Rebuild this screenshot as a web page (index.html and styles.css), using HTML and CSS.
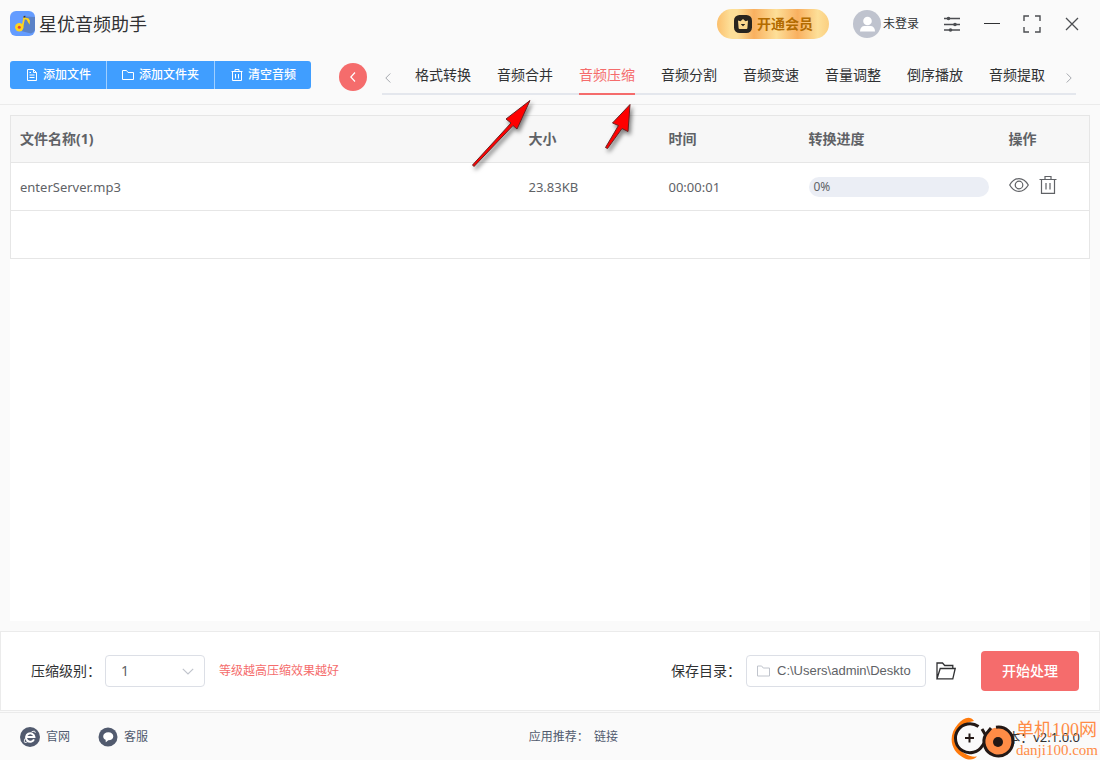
FILE: index.html
```html
<!DOCTYPE html>
<html lang="zh-CN">
<head>
<meta charset="utf-8">
<meta name="viewport" content="width=device-width, initial-scale=1">
<title>星优音频助手</title>
<link rel="stylesheet" href="styles.css">
</head>
<body>
<div class="app">
  <header class="titlebar">
    <div class="brand">
      <svg class="logo" viewBox="0 0 25 25" width="25" height="25" aria-hidden="true">
        <rect width="25" height="25" rx="6" fill="#649cff"/>
        <path d="M14.5 5.500 25 6V19a6 6 0 0 1-4 3.500L11 20Z" fill="#5a82c8"/>
        <circle cx="9.300" cy="16.200" r="4.200" fill="#ffd51c"/>
        <circle cx="9.300" cy="16.200" r="1.500" fill="#e2453c"/>
        <path d="M12.400 16 14.500 5.500" stroke="#ffd51c" stroke-width="1.700" fill="none"/>
        <path d="M13.800 5.800 16 7l2.300.300 1.600 2.200-.2 4.300-1.700-2.600-1.200-2.400-3-.7Z" fill="#ffd51c"/>
        <path d="m13.700 5 1.700-.2v1.600l-2 .4Z" fill="#2c3550"/>
      </svg>
      <h1 class="brand-name">星优音频助手</h1>
    </div>
    <div class="title-actions">
      <button class="vip" type="button">
        <svg viewBox="0 0 18 18" width="18" height="18" aria-hidden="true">
          <rect width="18" height="18" rx="5.500" fill="#29251f"/>
          <path d="M4 5.500 6.500 6.300 9 4l2.500 2.300L14 5.500l-.6 7.500a1 1 0 0 1-1 1H5.600a1 1 0 0 1-1-1Z" fill="#fcd88e"/>
          <path d="m7 9 2 2.100L11 9" fill="#29251f" stroke="#29251f" stroke-width=".6"/>
        </svg>
        <span>开通会员</span>
      </button>
      <button class="user" type="button">
        <svg viewBox="0 0 28 28" width="28" height="28" aria-hidden="true">
          <circle cx="14" cy="14" r="14" fill="#bfc3ce"/>
          <circle cx="14.500" cy="11" r="4.300" fill="#fff"/>
          <path d="M7 21.500c0-3.600 2-5.500 4.500-5.500h6c2.500 0 4.500 1.900 4.500 5.500Z" fill="#fff"/>
        </svg>
        <span>未登录</span>
      </button>
      <div class="window-controls">
        <button type="button" aria-label="设置">
          <svg viewBox="0 0 16 16" width="16" height="16" fill="none" stroke="#4c4e52" stroke-width="1.400"><path d="M0 2.500h16M0 8.500h16M0 14h16"/><g fill="#4c4e52" stroke="none"><circle cx="4.500" cy="2.500" r="1.800"/><circle cx="11" cy="8.500" r="1.800"/><circle cx="6.500" cy="14" r="1.800"/></g></svg>
        </button>
        <button type="button" aria-label="最小化">
          <svg viewBox="0 0 16 16" width="16" height="16" stroke="#303133" stroke-width="1"><path d="M0 7.500h16"/></svg>
        </button>
        <button type="button" aria-label="最大化">
          <svg viewBox="0 0 18 18" width="18" height="18" fill="none" stroke="#4c4e52" stroke-width="1.400"><path d="M1 6V1h5M12 1h5v5M17 12v5h-5M6 17H1v-5"/></svg>
        </button>
        <button type="button" aria-label="关闭">
          <svg viewBox="0 0 14 14" width="14" height="14" stroke="#4c4e52" stroke-width="1.300"><path d="m1 1 12 12M13 1 1 13"/></svg>
        </button>
      </div>
    </div>
  </header>

  <div class="toolbar">
    <div class="file-buttons">
      <button type="button">
        <svg viewBox="0 0 12 12" width="12" height="12" fill="none" stroke="#fff"><path d="M1.500.5h6l3 3v8h-9ZM7.500.5v3h3M3.500 3.500H5M3.500 6h5M3.500 8.500h5"/></svg>
        <span>添加文件</span>
      </button>
      <button type="button">
        <svg viewBox="0 0 12 12" width="12" height="12" fill="none" stroke="#fff"><path d="M.5 10.500v-9h4l1.500 2h5.500v7Z"/></svg>
        <span>添加文件夹</span>
      </button>
      <button type="button">
        <svg viewBox="0 0 12 12" width="12" height="12" fill="none" stroke="#fff"><path d="M.5 2.500h11M4 2.500v-2h4v2M1.500 2.500v9h9v-9M4.500 5v4.500M7.500 5v4.500"/></svg>
        <span>清空音频</span>
      </button>
    </div>
    <button class="back" type="button" aria-label="返回">
      <svg viewBox="0 0 6 10" width="6" height="10" fill="none" stroke="#fff" stroke-width="1.200"><path d="M5 .5.800 5 5 9.500"/></svg>
    </button>
    <nav class="tabs">
      <button class="tab-arrow" type="button" aria-label="向左">
        <svg viewBox="0 0 6 10" width="6" height="10" fill="none" stroke="#a5a8ae"><path d="M5.300.5.800 5l4.500 4.500"/></svg>
      </button>
      <div class="tab-list">
        <a href="#">格式转换</a>
        <a href="#">音频合并</a>
        <a href="#" class="active" aria-current="page">音频压缩</a>
        <a href="#">音频分割</a>
        <a href="#">音频变速</a>
        <a href="#">音量调整</a>
        <a href="#">倒序播放</a>
        <a href="#">音频提取</a>
      </div>
      <button class="tab-arrow" type="button" aria-label="向右">
        <svg viewBox="0 0 6 10" width="6" height="10" fill="none" stroke="#a5a8ae"><path d="M.7.500 5.200 5 .7 9.500"/></svg>
      </button>
    </nav>
  </div>

  <main class="content">
    <table class="files">
      <colgroup><col><col class="col-short"><col class="col-short"><col class="col-progress"><col class="col-ops"></colgroup>
      <thead>
        <tr><th>文件名称(1)</th><th>大小</th><th>时间</th><th>转换进度</th><th>操作</th></tr>
      </thead>
      <tbody>
        <tr>
          <td>enterServer.mp3</td>
          <td>23.83KB</td>
          <td>00:00:01</td>
          <td><div class="progress" role="progressbar" aria-label="转换进度" aria-valuenow="0" aria-valuemin="0" aria-valuemax="100">0%</div></td>
          <td>
            <div class="row-ops">
              <button type="button" aria-label="预览">
                <svg viewBox="0 0 20 18" width="20" height="18" fill="none" stroke="#606266" stroke-width="1.200"><path d="M.7 9C3 5 6 2.600 10 2.600S17 5 19.300 9C17 13 14 15.400 10 15.400S3 13 .7 9Z"/><circle cx="10" cy="9" r="3.800"/></svg>
              </button>
              <button type="button" aria-label="删除">
                <svg viewBox="0 0 18 18" width="18" height="18" fill="none" stroke="#606266" stroke-width="1.200"><path d="M.5 3.500h17M6 3.500v-3h6v3M2.500 3.500v13.900h13V3.500M7 7v6.500M11 7v6.500"/></svg>
              </button>
            </div>
          </td>
        </tr>
        <tr><td colspan="5"></td></tr>
      </tbody>
    </table>
  </main>

  <section class="settings">
    <div class="field">
      <label for="level">压缩级别：</label>
      <div class="select-wrap">
        <select id="level"><option>1</option><option>2</option><option>3</option></select>
        <svg class="caret" viewBox="0 0 12 7" width="12" height="7" fill="none" stroke="#c0c4cc" stroke-width="1.200"><path d="m.8.800 5.200 5.200L11.200.800"/></svg>
      </div>
      <span class="hint">等级越高压缩效果越好</span>
    </div>
    <div class="field">
      <label for="dir">保存目录：</label>
      <div class="path-box">
        <svg viewBox="0 0 13 12" width="13" height="12" fill="none" stroke="#c0c4cc"><path d="M.5 11V1h4.200l1.500 2h6.300v8Z"/></svg>
        <input id="dir" type="text" value="C:\Users\admin\Deskto">
      </div>
      <button class="open" type="button" aria-label="打开目录">
        <svg viewBox="0 0 20 18" width="20" height="18" fill="none" stroke="#303133" stroke-width="1.300"><path d="M1 16.800V1h5.500L8.700 3.500h8.100v3M1 16.800 4.200 6.500h15L16.800 16.800Z"/></svg>
      </button>
      <button class="start" type="button">开始处理</button>
    </div>
  </section>

  <footer class="footer">
    <div class="links">
      <a href="#">
        <svg viewBox="0 0 20 20" width="20" height="20" aria-hidden="true"><circle cx="10" cy="10" r="10" fill="#515a6e"/><g fill="none" stroke="#fff"><path d="M14 12.400A4.200 4.200 0 1 1 14.400 10H6.500" stroke-width="2"/><path d="M5.200 11.500c-1.300 2.700-1 4 0 4 .9 0 2.200-.6 3.300-1.400M11.500 5c2.400-1.200 4-1 3.700.8" stroke-width="1"/></g></svg>
        <span>官网</span>
      </a>
      <a href="#">
        <svg viewBox="0 0 20 20" width="20" height="20" aria-hidden="true"><circle cx="10" cy="10" r="9.500" fill="#515a6e"/><path d="M10.300 5.200c3 0 5 1.700 5 4 0 2.500-2 4.100-5 4.100l-2.500 2-.2-2.500c-1.500-.7-2.400-2-2.400-3.600 0-2.300 2.100-4 5.100-4Z" fill="#fff"/></svg>
        <span>客服</span>
      </a>
    </div>
    <p class="recommend">应用推荐： <a href="#">链接</a></p>
    <p class="version">版本：v2.1.0.0</p>
  </footer>

  <svg class="arrows" viewBox="0 0 180 90" width="180" height="90" aria-hidden="true">
    <g class="arrow-shape">
      <path d="M12.500 75 51 33l-5-4L70 10.500 57 39l-4-3.500L14 76.500Z"/>
      <path d="m145.500 57.500 13-22-6-2.500L170 14.500l-2 27-6-3L147.500 58.500Z"/>
    </g>
  </svg>

  <div class="watermark">
    <svg viewBox="0 0 66 44" width="66" height="44" aria-hidden="true">
      <path d="M24 5C20-1 13 2 8 8-3 20 1 36 14 42c5 2.500 10 2 13-1.500-8 1-16-4-19-10C3 20 8 8 24 5Z" fill="#ff7a0c"/>
      <circle cx="19.500" cy="22.500" r="15" fill="#fafafa"/>
      <path d="M28.500 10.500A14.500 14.500 0 1 0 32.500 29.500L37.500 22.500 32 13" fill="none" stroke="#231815" stroke-width="3"/>
      <path d="M19.500 17.500v9M15 22h9" stroke="#231815" stroke-width="2"/>
      <circle cx="48" cy="25.500" r="14" fill="#ff8c46"/>
      <path d="M46 11.200A14.500 14.500 0 1 1 36 18L41 12" fill="none" stroke="#231815" stroke-width="3"/>
      <circle cx="48" cy="26" r="5" fill="#231815"/>
    </svg>
    <div class="watermark-text"><span class="watermark-name">单机100网</span><span class="watermark-site">danji100.com</span></div>
  </div>
</div>
</body>
</html>
```
FILE: styles.css
```css
* { box-sizing: border-box; }

body {
  margin: 0;
  background: #fafafa;
  color: #303133;
  font: 14px/20px "Noto Sans", "Noto Sans CJK SC", sans-serif;
}

button, input, select { font: inherit; color: inherit; }
button { border: 0; padding: 0; background: none; cursor: pointer; }
a { color: inherit; text-decoration: none; }
svg { display: block; flex: none; }
p, h1 { margin: 0; }

.app {
  position: relative;
  display: flex;
  flex-direction: column;
  min-height: 100vh;
}

.titlebar {
  display: flex;
  align-items: center;
  justify-content: space-between;
  height: 47px;
  padding: 0 20px 0 10px;
}
.brand { display: flex; align-items: center; gap: 4px; }
.brand-name { font-size: 18px; font-weight: 400; line-height: 24px; }
.title-actions { display: flex; align-items: center; height: 46px; }

.vip {
  display: flex;
  align-items: center;
  gap: 5px;
  height: 30px;
  padding: 0 16px 0 17px;
  border-radius: 15px;
  background: linear-gradient(90deg, #fbbf6c 0%, #fddf98 12%, #fddf98 18%, #f9b060 33%, #fddf98 53%, #f9b060 72%, #fddf98 90%, #fbcf80 100%);
  color: #b36b00;
  font-weight: 700;
}
.user {
  display: flex;
  align-items: center;
  gap: 2px;
  margin-left: 24px;
  font-size: 12px;
}
.window-controls { display: flex; margin-left: 13px; }
.window-controls button {
  display: flex;
  align-items: center;
  justify-content: center;
  width: 40px;
  height: 30px;
}
.window-controls button:last-child { margin-right: -12px; }

.toolbar {
  display: flex;
  align-items: flex-start;
  height: 58px;
  padding: 14px 24px 0 10px;
  border-bottom: 1px solid #ebebeb;
}
.file-buttons {
  display: flex;
  border-radius: 3px;
  overflow: hidden;
  background: #409eff;
  color: #fff;
  font-size: 12px;
  font-weight: 500;
}
.file-buttons button {
  display: flex;
  align-items: center;
  gap: 5px;
  height: 28px;
  padding: 0 15px;
}
.file-buttons button:first-child,
.file-buttons button:last-child { padding-left: 16px; }
.file-buttons button + button { border-left: 1px solid #a0cfff; }
.back {
  display: flex;
  align-items: center;
  justify-content: center;
  width: 28px;
  height: 28px;
  margin: 2px 15px 0 28px;
  border-radius: 50%;
  background: #f56c6c;
}
.tabs {
  display: flex;
  flex: 1;
  height: 34px;
  border-bottom: 2px solid #e4e7ed;
}
.tab-arrow { padding: 2px 4px 0 3px; height: 32px; }
.tab-list {
  display: flex;
  flex: 1;
  gap: 26px;
  padding-left: 20px;
}
.tab-list a { height: 34px; line-height: 28px; white-space: nowrap; }
.tab-list .active { color: #f56c6c; border-bottom: 2px solid #f56c6c; }

.content {
  flex: 1;
  margin: 10px;
  background: #fff;
}
.files {
  width: 100%;
  table-layout: fixed;
  border-collapse: collapse;
  border: 1px solid #e6e6e6;
  color: #606266;
}
.col-short { width: 140px; }
.col-progress { width: 200px; }
.col-ops { width: 91px; }
.files th, .files td {
  height: 48px;
  padding: 0 10px;
  border-bottom: 1px solid #e6e6e6;
  text-align: left;
}
.files th { height: 47px; background: #f7f7f7; font-weight: 700; }
.files td { font-size: 13px; }
.files th:first-child, .files td:first-child { padding-left: 9px; }
.progress {
  height: 20px;
  padding: 0 5px;
  border-radius: 10px;
  background: #ebeef5;
  font-size: 12px;
}
.row-ops { display: flex; gap: 10px; padding-bottom: 4px; }

.settings {
  display: flex;
  align-items: center;
  justify-content: space-between;
  height: 80px;
  padding: 0 20px 0 30px;
  border: 1px solid #ebebeb;
  background: #fff;
}
.field { display: flex; align-items: center; }
.select-wrap { position: relative; margin: 0 14px 0 4px; }
.select-wrap select {
  appearance: none;
  width: 100px;
  height: 32px;
  padding: 0 30px 0 15px;
  border: 1px solid #dcdfe6;
  border-radius: 4px;
  background: #fff;
  color: #606266;
}
.caret { position: absolute; right: 11px; top: 13px; pointer-events: none; }
.hint { color: #f56c6c; font-size: 12px; }
.path-box {
  display: flex;
  align-items: center;
  gap: 7px;
  width: 180px;
  height: 32px;
  margin-left: 5px;
  padding: 0 10px;
  border: 1px solid #dcdfe6;
  border-radius: 4px;
}
.path-box input {
  flex: 1;
  min-width: 0;
  padding: 0;
  border: 0;
  outline: 0;
  background: none;
  color: #606266;
  font: 13px/20px "Liberation Sans", sans-serif;
}
.open { margin: 0 25px 0 10px; }
.start {
  height: 40px;
  padding: 0 21px;
  border-radius: 4px;
  background: #f56c6c;
  color: #fff;
  font-weight: 500;
}

.footer {
  display: grid;
  grid-template-columns: 48% 1fr auto;
  align-items: center;
  height: 48px;
  margin-top: 1px;
  padding: 0 20px;
  border-top: 1px solid #ebebeb;
  color: #515a6e;
  font-size: 12px;
}
.links { display: flex; gap: 28px; }
.links a { display: flex; align-items: center; gap: 6px; }
.recommend a { margin-left: 2px; }
.version { color: #303133; font-size: 13px; }

.arrows {
  position: absolute;
  left: 460px;
  top: 90px;
  pointer-events: none;
}
.arrow-shape {
  fill: #f00;
  stroke: #6b2020;
  stroke-width: 1;
  filter: drop-shadow(2px 3px 2px #00000080);
}

.watermark {
  position: absolute;
  right: 2px;
  bottom: 0;
  display: flex;
  color: #ff8c46;
  font-family: "Liberation Serif", "Noto Sans CJK SC", serif;
  pointer-events: none;
}
.watermark-text { display: flex; flex-direction: column; padding-top: 3px; }
.watermark-name { font-size: 18px; line-height: 22px; }
.watermark-site { font-size: 15px; line-height: 18px; }
```
